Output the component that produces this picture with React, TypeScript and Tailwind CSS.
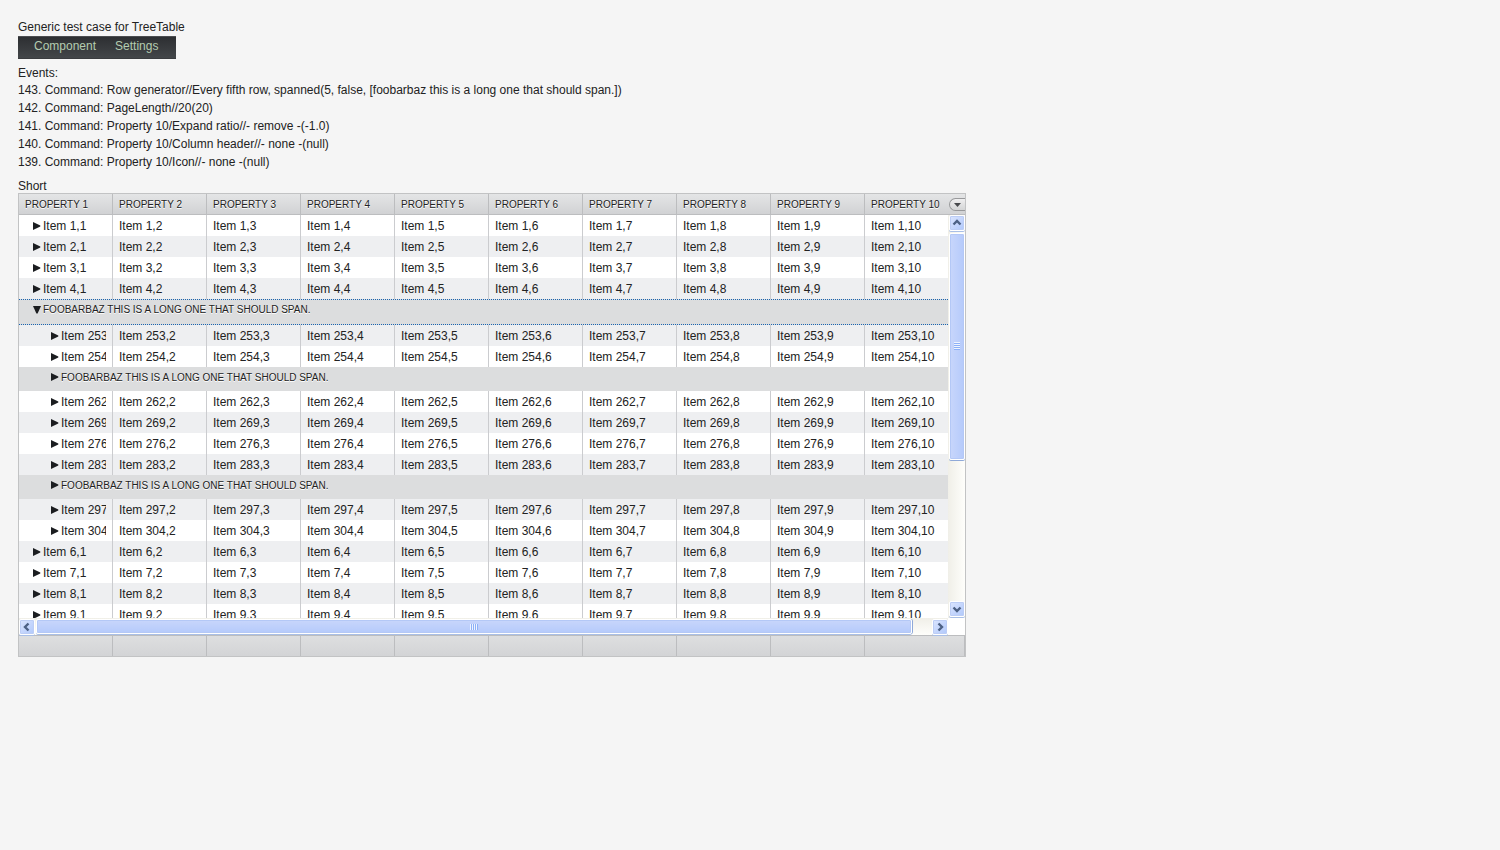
type Row = { kind: "item"; id: number; depth: number } | { kind: "span"; depth: number; open?: boolean };

const item = (id: number, depth = 0): Row => ({ kind: "item", id, depth });

const rows: Row[] = [
  item(1), item(2), item(3), item(4),
  { kind: "span", depth: 0, open: true },
  item(253, 1), item(254, 1),
  { kind: "span", depth: 1 },
  item(262, 1), item(269, 1), item(276, 1), item(283, 1),
  { kind: "span", depth: 1 },
  item(297, 1), item(304, 1),
  item(6), item(7), item(8), item(9),
];

const columns = [1, 2, 3, 4, 5, 6, 7, 8, 9, 10];

const events = [
  "143. Command: Row generator//Every fifth row, spanned(5, false, [foobarbaz this is a long one that should span.])",
  "142. Command: PageLength//20(20)",
  "141. Command: Property 10/Expand ratio//- remove -(-1.0)",
  "140. Command: Property 10/Column header//- none -(null)",
  "139. Command: Property 10/Icon//- none -(null)",
];

function Cols() {
  return (
    <colgroup>
      {columns.map((c) => (
        <col key={c} className={c < 10 ? "w-[94px]" : ""} />
      ))}
    </colgroup>
  );
}

function Toggle({ open, label }: { open?: boolean; label: string }) {
  return (
    <button type="button" aria-label={label} aria-expanded={!!open} className="flex h-3 w-2.5 shrink-0 items-center">
      <svg width="8" height="8" viewBox="0 0 8 8" fill="#1b1d20">
        {open ? <path d="M0 0H8L4.6 7.5H3.4Z" /> : <path d="M0 0V8L7.3 4.6V3.4Z" />}
      </svg>
    </button>
  );
}

const arrows = {
  up: "M3.5 8.5L7 5L10.5 8.5",
  down: "M3.5 5.5L7 9L10.5 5.5",
  left: "M8.5 3.5L5 7L8.5 10.5",
  right: "M5.5 3.5L9 7L5.5 10.5",
};

function ScrollButton({ dir }: { dir: keyof typeof arrows }) {
  return (
    <button
      type="button"
      aria-label={"Scroll " + dir}
      className="flex size-4 shrink-0 items-center justify-center rounded-xs border border-white bg-linear-to-br from-[#dbe5fe] to-[#b0c8fb] shadow-[inset_0_0_0_1px_#bccdf5,0_1px_0_#a9bfe6]"
    >
      <svg width="14" height="14" viewBox="0 0 14 14" fill="none" stroke="#4d6185" strokeWidth="2.4">
        <path d={arrows[dir]} />
      </svg>
    </button>
  );
}

function ItemRow({ id, depth, odd }: { id: number; depth: number; odd: boolean }) {
  return (
    <tr className={odd ? "h-[21px] bg-[#eeeff1]" : "h-[21px] bg-white"}>
      {columns.map((c) => (
        <td key={c} className={c < 10 ? "border-r border-[#cbcccf] px-1.5 py-0" : "px-1.5 py-0"}>
          {c === 1 ? (
            <div className={depth ? "flex items-center overflow-hidden pl-[26px]" : "flex items-center overflow-hidden pl-2"}>
              <Toggle label={"Expand item " + id} />
              <span className="whitespace-nowrap">Item {id},{c}</span>
            </div>
          ) : (
            <div className="overflow-hidden whitespace-nowrap">Item {id},{c}</div>
          )}
        </td>
      ))}
    </tr>
  );
}

function SpanRow({ depth, open }: { depth: number; open?: boolean }) {
  return (
    <tr className={open ? "h-[26px] bg-[#dcddde]" : "h-6 bg-[#dcddde]"}>
      <td
        colSpan={10}
        className={open ? "border-y border-dotted border-[#1a64b0] px-1.5 py-0 align-top" : "px-1.5 py-0 align-top"}
      >
        <div className={depth ? "flex h-5 items-center pl-[26px]" : "flex h-5 items-center pl-2"}>
          <Toggle open={open} label="Toggle group" />
          <span
            className={
              open
                ? "text-[10px] uppercase whitespace-nowrap [text-shadow:0_1px_0_#fff]"
                : "pt-0.5 text-[10px] uppercase whitespace-nowrap [text-shadow:0_1px_0_#fff]"
            }
          >
            foobarbaz this is a long one that should span.
          </span>
        </div>
      </td>
    </tr>
  );
}

export default function App() {
  return (
    <div className="min-h-screen bg-[#f5f5f5] px-[18px] pt-[18px] font-['Liberation_Sans',Arial,sans-serif] text-xs leading-[18px] text-[#222]">
      <h1>Generic test case for TreeTable</h1>
      <nav
        aria-label="Test menu"
        className="flex h-[23px] w-[158px] items-start gap-[19px] border-t border-b border-[#4b4d50] border-b-[#3a3c3f] bg-linear-to-b from-[#2d2f32] to-[#434649] px-4 text-[#b4ccb0]"
      >
        <button type="button">Component</button>
        <button type="button">Settings</button>
      </nav>
      <section className="pt-1.5">
        <h2 className="pt-px leading-[15px]">Events:</h2>
        <ul>
          {events.map((e) => (
            <li key={e}>{e}</li>
          ))}
        </ul>
      </section>
      <h2 id="caption" className="pt-2 leading-[14px]">Short</h2>
      <div className="w-full max-w-[948px] border border-[#c2c3c4] bg-white">
        <div className="relative">
          <table aria-labelledby="caption" className="w-full table-fixed border-separate border-spacing-0">
            <Cols />
            <thead>
              <tr className="h-[21px] bg-linear-to-b from-[#e4e5e6] to-[#d0d1d3]">
                {columns.map((c) => (
                  <th
                    key={c}
                    scope="col"
                    className="border-r border-b border-[#bcbdbf] px-1.5 pt-0.5 pb-0 text-left text-[10px] leading-[18px] font-normal whitespace-nowrap uppercase last:border-r-0 [text-shadow:0_1px_0_#fff]"
                  >
                    Property {c}
                  </th>
                ))}
              </tr>
            </thead>
          </table>
          <button
            type="button"
            aria-label="Choose columns"
            className="absolute top-1 right-0 flex h-[13px] w-4 items-center justify-center rounded-l-full border border-r-0 border-[#98999b] bg-linear-to-b from-[#efeff0] to-[#d4d5d6]"
          >
            <svg width="7" height="4" viewBox="0 0 7 4" fill="#47494c">
              <path d="M0 0H7L3.5 4Z" />
            </svg>
          </button>
        </div>
        <div className="flex">
          <div className="max-h-[403px] min-w-0 flex-1 overflow-hidden">
            <table aria-labelledby="caption" className="w-full table-fixed border-separate border-spacing-0">
              <Cols />
              <tbody>
                {rows.map((r, i) =>
                  r.kind === "item" ? (
                    <ItemRow key={i} id={r.id} depth={r.depth} odd={i % 2 === 1} />
                  ) : (
                    <SpanRow key={i} depth={r.depth} open={r.open} />
                  ),
                )}
              </tbody>
            </table>
          </div>
          <div className="flex w-[17px] flex-col items-center bg-linear-to-r from-[#f0efe8] to-[#fefefb] pb-px">
            <ScrollButton dir="up" />
            <div className="flex w-4 flex-1 flex-col pt-0.5">
              <div className="flex h-[227px] flex-col items-center justify-center gap-px rounded-xs border border-white bg-linear-to-r from-[#c8d6fb] to-[#b5cafb] shadow-[inset_0_0_0_1px_#b4c8f6,0_1px_0_#8fa9d8]">
                {[0, 1, 2, 3].map((n) => (
                  <span key={n} className="h-px w-1.5 bg-[#8cb0f8] shadow-[0_-1px_0_#eef4fe]" />
                ))}
              </div>
            </div>
            <ScrollButton dir="down" />
          </div>
        </div>
        <div className="flex h-[17px] pr-[17px]">
          <div className="flex w-full bg-linear-to-b from-[#f0efe8] to-[#fefefb] py-px">
            <ScrollButton dir="left" />
            <div className="flex flex-1 pl-px">
              <div className="flex w-[97.8%] items-center justify-center gap-px rounded-xs border border-white bg-linear-to-b from-[#c8d6fb] to-[#b5cafb] shadow-[inset_0_0_0_1px_#b4c8f6,1px_0_0_#8fa9d8,0_1px_0_#a9bfe6]">
                {[0, 1, 2, 3].map((n) => (
                  <span key={n} className="h-1.5 w-px bg-[#8cb0f8] shadow-[-1px_0_0_#eef4fe]" />
                ))}
              </div>
            </div>
            <ScrollButton dir="right" />
          </div>
        </div>
        <table aria-label="Footer" className="w-full table-fixed border-separate border-spacing-0">
          <Cols />
          <tbody>
            <tr className="h-[21px] bg-linear-to-b from-[#dedfe0] to-[#d3d4d6]">
              {columns.map((c) => (
                <td key={c} className="border-t border-r border-[#bcbdbf] p-0" />
              ))}
            </tr>
          </tbody>
        </table>
      </div>
    </div>
  );
}
